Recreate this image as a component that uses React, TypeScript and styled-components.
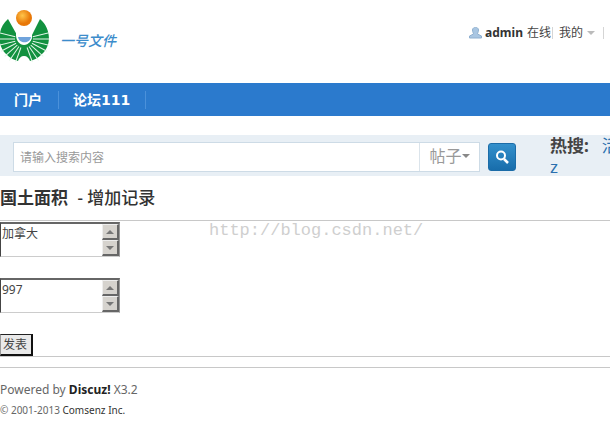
import React from "react";
import styled, { createGlobalStyle } from "styled-components";

const sans = `"Noto Sans", "Noto Sans CJK SC", sans-serif`;

const Global = createGlobalStyle`
  *, *::before, *::after { box-sizing: border-box; }
  body {
    margin: 0;
    background: #fff;
    color: #444;
    font: 12px/16px ${sans};
    overflow-x: hidden;
  }
  button, input, select, textarea { font: inherit; color: inherit; border-radius: 0; }
  a { color: inherit; text-decoration: none; }
`;

const Page = styled.div`
  overflow: hidden;
`;

const Header = styled.header`
  display: flex;
  justify-content: space-between;
  align-items: flex-start;
  height: 83px;
`;

const Brand = styled.a`
  display: flex;
  align-items: center;
  gap: 11px;
  padding-top: 8px;
`;

const BrandName = styled.span`
  padding-top: 12px;
  color: #3c8ccb;
  font: italic 500 14px/20px ${sans};
`;

const UserBar = styled.div`
  display: flex;
  align-items: center;
  padding-top: 24px;
  line-height: 18px;
  white-space: nowrap;
`;

const UserName = styled.a`
  margin: 0 4px 0 3px;
  font-weight: 700;
  color: #333;
`;

const Divider = styled.i`
  width: 1px;
  height: 12px;
  margin: 0 6px 0 1px;
  background: #d5d5d5;
`;

const MenuButton = styled.button`
  display: flex;
  align-items: center;
  gap: 4px;
  padding: 0 7px 0 0;
  border: 0;
  background: none;
`;

const Nav = styled.nav`
  display: flex;
  align-items: center;
  height: 33px;
  background: #2b7acd;
`;

const NavLink = styled.a`
  padding: 0 15px 0 14px;
  border-right: 1px solid #4b91da;
  color: #fff;
  font: 700 14px/18px "DejaVu Sans", "Noto Sans CJK SC", sans-serif;
  &:first-child { padding-right: 16px; }
`;

const SearchBar = styled.form`
  display: flex;
  align-items: center;
  height: 41px;
  margin-top: 19px;
  padding-left: 13px;
  background: #e8eff5;
`;

const SearchField = styled.div`
  display: flex;
  flex: 1;
  height: 30px;
  margin-top: 2px;
  border: 1px solid #cddbe6;
  background: #fff;
`;

const SearchInput = styled.input`
  flex: 1;
  min-width: 0;
  padding: 3px 6px 0;
  border: 0;
  outline: 0;
  background: none;
  &::placeholder { color: #999; opacity: 1; }
`;

const TypeButton = styled.button`
  display: flex;
  align-items: center;
  justify-content: center;
  width: 60px;
  padding: 0 0 2px;
  border: 0;
  border-left: 1px solid #dbe4eb;
  background: none;
  color: #999;
  font-size: 16px;
`;

const SearchButton = styled.button`
  display: grid;
  place-items: center;
  width: 28px;
  height: 28px;
  margin: 2px 34px 0 8px;
  padding: 0;
  border: 1px solid #1b6ca8;
  border-radius: 3px;
  background: linear-gradient(#3390cc, #186dab);
`;

const HotWords = styled.div`
  width: 60px;
  height: 41px;
  overflow: hidden;
  color: #2a6fae;
  font-size: 17px;
  line-height: 21px;
  white-space: nowrap;
  strong { color: #444; }
`;

const HotRow = styled.div`
  display: flex;
  gap: 13px;
`;

const Title = styled.h1`
  margin: 0;
  padding: 11px 0;
  color: #333;
  font: 500 17px/22px ${sans};
  strong { margin-right: 5px; }
`;

const RecordForm = styled.form`
  display: flex;
  flex-direction: column;
  align-items: flex-start;
  gap: 21px;
  padding-top: 1px;
  border: solid #c8c8c8;
  border-width: 1px 0;
`;

const AreaBox = styled.div`
  display: grid;
  grid-template-columns: 1fr 17px;
  width: 120px;
  height: 35px;
  border: solid;
  border-width: 2px 1px 1px;
  border-color: #666 #999 #ccc #444;
`;

const Area = styled.textarea`
  display: block;
  height: 100%;
  min-width: 0;
  padding: 2px 1px;
  border: 0;
  outline: 0;
  resize: none;
  overflow: hidden;
  background: #fff;
`;

const Spinner = styled.div`
  display: grid;
  grid-template-rows: 1fr 1fr;
`;

const SpinButton = styled.button`
  display: grid;
  place-items: center;
  padding: 0;
  border: 1px solid #eee;
  border-right: 2px solid #666;
  border-bottom: 2px solid #666;
  background: #d6d3ce;
`;

const Submit = styled.button`
  height: 22px;
  padding: 0 4px 0 2px;
  border: solid;
  border-width: 1px 2px 2px 1px;
  border-color: #222 #111 #111 #999;
  background: #e9e9e9;
  line-height: 18px;
`;

const Footer = styled.footer`
  margin-top: 10px;
  padding-top: 12px;
  border-top: 1px solid #c8c8c8;
  color: #666;
  p { margin: 0; line-height: 20px; }
  strong { color: #222; }
`;

const Copyright = styled.p`
  font-size: 10px;
  a { color: #333; }
`;

const Watermark = styled.span`
  position: absolute;
  top: 220px;
  left: 209px;
  color: #cfcfcf;
  font: 17px/22px "Liberation Mono", monospace;
  pointer-events: none;
`;

const Caret = ({ up = false, color = "#777" }: { up?: boolean; color?: string }) => (
  <svg width="8" height="4" viewBox="0 0 8 4" aria-hidden="true">
    <path d={up ? "M0 4 4 0 8 4Z" : "M0 0h8L4 4Z"} fill={color} />
  </svg>
);

const rays = [42, 56, 70, 84, 98, 112, 126];

const Logo = () => (
  <svg width="49" height="54" viewBox="0 0 49 54" role="img" aria-label="一号文件">
    <defs>
      <radialGradient id="sun" cx="40%" cy="35%">
        <stop offset="0" stopColor="#ffc54a" />
        <stop offset="1" stopColor="#e87808" />
      </radialGradient>
    </defs>
    <path d="M8 11C-3 20-3 38 6 46c4 4 8 6 12 7 1-3 3-5 6-5s5 2 6 5c4-1 8-3 12-7 10-9 9-26-2-35l-8 16c1 12-16 12-15 0Z" fill="#12913f" />
    {rays.map((a) => (
      <g key={a} stroke="#e4f6e9" strokeWidth="1">
        <path d="M24 40v17" transform={`rotate(${a - 22} 24 31)`} />
        <path d="M24 40v17" transform={`rotate(${22 - a} 24 31)`} />
      </g>
    ))}
    <path d="M16 25c-1 16 17 16 16 0Z" fill="#fff" />
    <path d="M18 29h13c-1 7-12 7-13 0Z" fill="#6fa3dc" />
    <circle cx="24" cy="10" r="8" fill="url(#sun)" />
  </svg>
);

const Field = ({ label, value }: { label: string; value: string }) => (
  <AreaBox>
    <Area aria-label={label} defaultValue={value} />
    <Spinner>
      <SpinButton type="button" aria-label="向上"><Caret up /></SpinButton>
      <SpinButton type="button" aria-label="向下"><Caret /></SpinButton>
    </Spinner>
  </AreaBox>
);

export default function App() {
  return (
    <Page>
      <Global />
      <Header>
        <Brand href="#"><Logo /><BrandName>一号文件</BrandName></Brand>
        <UserBar>
          <svg width="13" height="12" viewBox="0 0 13 12" aria-hidden="true">
            <path d="M3.500 3C3.500-.5 9.500-.5 9.500 3c0 2-1 3-1 4l4 2v2H.5V9l4-2c0-1-1-2-1-4Z" fill="#a9c6e2" stroke="#8fb0d0" />
          </svg>
          <UserName href="#">admin</UserName>
          <span>在线</span>
          <Divider />
          <MenuButton type="button">我的<Caret color="#bbb" /></MenuButton>
          <Divider />
        </UserBar>
      </Header>
      <Nav>
        <NavLink href="#">门户</NavLink>
        <NavLink href="#">论坛111</NavLink>
      </Nav>
      <SearchBar onSubmit={(e) => e.preventDefault()}>
        <SearchField>
          <SearchInput aria-label="搜索" placeholder="请输入搜索内容" />
          <TypeButton type="button">帖子<Caret color="#888" /></TypeButton>
        </SearchField>
        <SearchButton aria-label="搜索">
          <svg width="14" height="14" viewBox="0 0 14 14" fill="none" stroke="#fff" aria-hidden="true">
            <circle cx="6" cy="5.500" r="4" strokeWidth="2" />
            <path d="m9 9 4 4" strokeWidth="2.500" />
          </svg>
        </SearchButton>
        <HotWords>
          <HotRow><strong>热搜:</strong><a href="#">活动</a></HotRow>
          <a href="#">z</a>
        </HotWords>
      </SearchBar>
      <main>
        <Title><strong>国土面积</strong> - 增加记录</Title>
        <RecordForm onSubmit={(e) => e.preventDefault()}>
          <Field label="国家" value="加拿大" />
          <Field label="国土面积" value="997" />
          <Submit>发表</Submit>
        </RecordForm>
      </main>
      <Footer>
        <p>Powered by <strong>Discuz!</strong> X3.2</p>
        <Copyright>© 2001-2013 <a href="#">Comsenz Inc.</a></Copyright>
      </Footer>
      <Watermark>http://blog.csdn.net/</Watermark>
    </Page>
  );
}
